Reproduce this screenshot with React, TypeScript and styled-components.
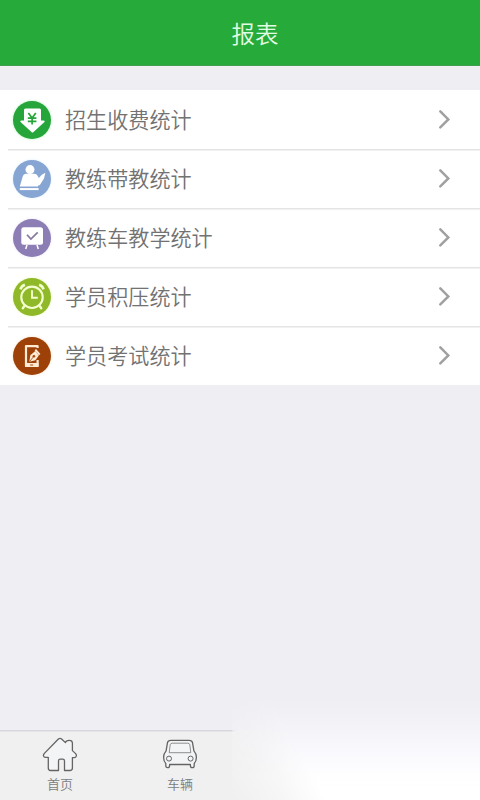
import React from 'react';
import styled, { createGlobalStyle } from 'styled-components';

const GlobalStyle = createGlobalStyle`
  * {
    box-sizing: border-box;
  }

  body {
    margin: 0;
    background: #efeef3;
    font-family: 'Noto Sans CJK SC', sans-serif;
  }
`;

const Page = styled.div`
  position: relative;
  display: flex;
  flex-direction: column;
  height: 100vh;
  overflow: hidden;
  background: #efeef3;
`;

const Header = styled.header`
  display: flex;
  align-items: center;
  justify-content: center;
  height: 66px;
  padding: 0 0 0 30px;
  background: #26ab3b;
  border-bottom: 1px solid #3fa14d;
  color: #e2fbe3;
  font-size: 23.5px;
  font-weight: 350;
`;

const List = styled.ul`
  flex: 1;
  margin: 0;
  padding: 24px 0 0;
  list-style: none;
`;

const Row = styled.li`
  display: flex;
  align-items: center;
  height: 59.1px;
  padding: 0 29px 0 13px;
  background: #fff;
  cursor: pointer;

  & + & {
    background: linear-gradient(#e4e4e4, #e4e4e4) 8px 0 / 100% 1.5px no-repeat #fff;
  }
`;

const Badge = styled.span<{ $color: string; $glow: string }>`
  display: flex;
  width: 38px;
  height: 38px;
  border-radius: 50%;
  background: ${({ $color }) => $color};
  box-shadow: 0 0 3px ${({ $glow }) => $glow};
`;

const Label = styled.span`
  flex: 1;
  margin-left: 14px;
  padding-bottom: 1px;
  color: #727272;
  font-size: 21.1px;
  font-weight: 350;
  line-height: 30px;
`;

const TabBar = styled.nav`
  display: flex;
  height: 70px;
  background:
    linear-gradient(90deg, #d8d7df 232px, transparent 236px) 0 0 / 100% 1.5px no-repeat,
    #f0f0f0;
`;

const Tab = styled.a`
  display: flex;
  flex-direction: column;
  align-items: center;
  width: 120px;
  padding-top: 6px;
  color: #7c7c7c;
  font-size: 13px;
  font-weight: 350;
  line-height: 18px;

  svg {
    margin-bottom: 3px;
  }
`;

// white fade over the right part of the tab bar
const Fade = styled.div`
  position: absolute;
  right: 0;
  bottom: 0;
  width: 248px;
  height: 100px;
  pointer-events: none;
  background: linear-gradient(#efeef3 0, #f4f4f8 28%, #f9f9fd 50%, #fefeff 75%, #fff 90%);
  mask-image: linear-gradient(60deg, transparent 0, rgba(0, 0, 0, 0.45) 48px, rgba(0, 0, 0, 0.65) 60px, #000 84px);
`;

const FeeIcon = () => (
  <svg width='38' height='38' viewBox='0 0 38 38'>
    <path d='M12.5 7.5h14q1.5 0 1.5 1.5v10.5h2.5q2 .3.7 1.8L20.5 31q-1 1-2 0L7.8 21.3q-1.3-1.5.7-1.8H11V9q0-1.5 1.5-1.5z' fill='#fff' />
    <path d='M15.4 12l3.7 5 3.7-5M14.8 17.2h8.6M14.8 20.4h8.6M19.1 17v6.5' fill='none' stroke='#26a53a' strokeWidth='1.7' />
  </svg>
);

const CoachIcon = () => (
  <svg width='38' height='38' viewBox='0 0 38 38'>
    <circle cx='17' cy='9.6' r='4.5' fill='#fff' />
    <path d='M6.8 26.6l3-10.3q.6-2.5 3-2.5h8.6q2.2 0 3.2 2l1.2 2.3 3-3.4 3.6-1.9-1.4 5.6-3.8 6.2q-1 1.4-2.2.8v1.2z' fill='#fff' />
    <path d='M6.8 28.1h18.8v2H6.8z' fill='#fff' />
  </svg>
);

const BoardIcon = () => (
  <svg width='38' height='38' viewBox='0 0 38 38'>
    <rect x='8.3' y='8.3' width='21.7' height='17.5' rx='2.5' fill='#fff' />
    <path d='M14 26l-1.3 4M24 26l1.3 4' stroke='#fff' strokeWidth='1.5' />
    <path d='M14 15.8l3.9 4.3 6.8-6.7' fill='none' stroke='#85779f' strokeWidth='1.7' />
  </svg>
);

const ClockIcon = () => (
  <svg width='38' height='38' viewBox='0 0 38 38' fill='none' stroke='#f4ffcf'>
    <circle cx='19' cy='19.3' r='10.7' strokeWidth='2.1' />
    <path d='M19 12.2v7.5h5.8' strokeWidth='1.9' />
    <path d='M7.4 11.4q1-3.4 4.5-4.6M30.6 11.4q-1-3.4-4.5-4.6' strokeWidth='2.5' />
    <path d='M11.8 27.4l-2 2.8M26.2 27.4l2 2.8' strokeWidth='2.4' strokeLinecap='round' />
  </svg>
);

const ExamIcon = () => (
  <svg width='38' height='38' viewBox='0 0 38 38'>
    <path d='M24.6 11V9.2H13V29h11.6v-6' fill='none' stroke='#ffead2' strokeWidth='2.2' strokeLinejoin='round' />
    <path d='M12 26h13.5v4H12z' fill='#ffead2' />
    <path d='M17.2 28h3' stroke='#a44810' strokeWidth='1' />
    <path d='M16.3 24.8l1-6.5 5-4.2 3.5 4.3-3.4 4.8z' fill='#ffead2' />
    <path d='M22.3 12.6l4.4 5' stroke='#ffead2' strokeWidth='2' />
    <circle cx='20.9' cy='19.3' r='1.3' fill='#a44810' />
    <path d='M16.6 24.5l3.7-4.5' stroke='#a44810' strokeWidth='.8' />
  </svg>
);

const Arrow = () => (
  <svg width='14' height='22' viewBox='0 0 14 22'>
    <path d='M3.3 2.4l8 8-8 8' fill='none' stroke='#a0a0a0' strokeWidth='2.5' strokeLinecap='round' />
  </svg>
);

const HomeIcon = () => (
  <svg width='36' height='36' viewBox='0 0 36 36' fill='#f3f4f6' stroke='#646464' strokeWidth='1.3' strokeLinejoin='round'>
    <path d='M16.4 3q1.6-1.2 3.2 0l3.8 3.6c.4-1.8 1.5-2.3 3.8-2.3 2.3 0 3.2.8 3.2 2.8v7.5l3.2 3c1.5 1.5.8 4-1.4 4h-1.8V32q0 2.5-2.5 2.5h-5.4V25q0-1.8-1.8-1.8h-2.4q-1.8 0-1.8 1.8v9.5H8.6Q6.3 34.5 6.3 32V21.4H3.6c-2.4 0-2.8-2.6-1.2-4z' />
  </svg>
);

const CarIcon = () => (
  <svg width='36' height='36' viewBox='0 0 36 36' fill='#f3f4f6' stroke='#646464' strokeWidth='1.3' strokeLinejoin='round'>
    <path d='M8.8 4.4h18.4q2.8 0 3.3 2.3l1.4 8.2q2.5 2.8 2.5 6.3 0 4-2.2 6.2v2q0 2.3-1.8 2.3-2 0-2-2.3v-.9H7.6v.9q0 2.3-2 2.3-1.8 0-1.8-2.3v-2q-2.2-2.2-2.2-6.2 0-3.5 2.5-6.3l1.4-8.2q.5-2.3 3.3-2.3z' />
    <path d='M10.2 7.2h15.6q1.7 0 2 1.5l1 8H7.2l1-8q.3-1.5 2-1.5z' strokeWidth='.7' />
    <circle cx='7' cy='22.6' r='2.5' strokeWidth='1' />
    <circle cx='28.6' cy='22.6' r='2.5' strokeWidth='1' />
  </svg>
);

const reports = [
  { name: '招生收费统计', color: '#26a53a', glow: '#b5f5bd', icon: <FeeIcon /> },
  { name: '教练带教统计', color: '#86a5d2', glow: '#dfeeff', icon: <CoachIcon /> },
  { name: '教练车教学统计', color: '#8c7db4', glow: '#e9e2fa', icon: <BoardIcon /> },
  { name: '学员积压统计', color: '#8fb929', glow: '#ebfcbd', icon: <ClockIcon /> },
  { name: '学员考试统计', color: '#9d4109', glow: '#ffdcc0', icon: <ExamIcon /> },
];

const App: React.FC = () => {
  return (
    <Page>
      <GlobalStyle />
      <Header>报表</Header>
      <List>
        {reports.map((item) => (
          <Row key={item.name}>
            <Badge $color={item.color} $glow={item.glow}>{item.icon}</Badge>
            <Label>{item.name}</Label>
            <Arrow />
          </Row>
        ))}
      </List>
      <TabBar>
        <Tab>
          <HomeIcon />
          首页
        </Tab>
        <Tab>
          <CarIcon />
          车辆
        </Tab>
      </TabBar>
      <Fade />
    </Page>
  );
};

export default App;
